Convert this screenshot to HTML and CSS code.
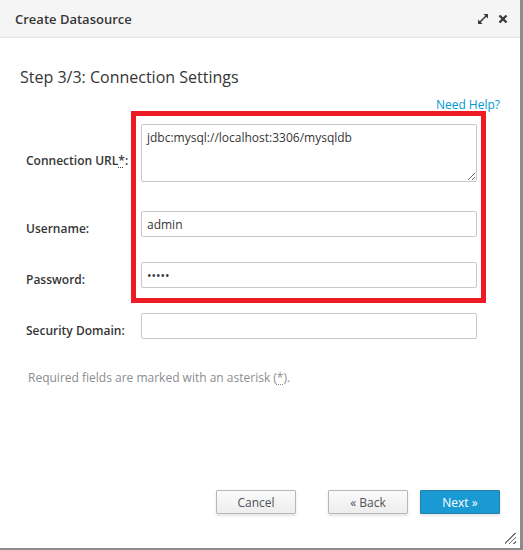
FILE: index.html
```html
<!DOCTYPE html>
<html>
<head>
<meta charset="utf-8">
<link rel="stylesheet" href="styles.css">
</head>
<body>
<div class="dialog">
  <div class="header">
    <span class="title">Create Datasource</span>
    <div class="tools">
      <svg class="ico" width="12" height="12" viewBox="0 0 12 12"><path d="M2 10 L10 2" stroke="#3a3a3a" stroke-width="1.6"/><path d="M1 11 L1 6.5 L5.5 11 Z" fill="#3a3a3a"/><path d="M11 1 L11 5.5 L6.5 1 Z" fill="#3a3a3a"/></svg>
      <svg class="ico" width="10" height="10" viewBox="0 0 10 10"><path d="M1.5 1.5 L8.5 8.5 M8.5 1.5 L1.5 8.5" stroke="#3a3a3a" stroke-width="2.4"/></svg>
    </div>
  </div>
  <div class="body">
    <h2 class="step">Step 3/3: Connection Settings</h2>
    <div class="help"><a href="#">Need Help?</a></div>
    <div class="form">
      <label class="lbl lbl-url">Connection URL<abbr title="required">*</abbr>:</label>
      <textarea class="ctl area">jdbc:mysql://localhost:3306/mysqldb</textarea>
      <label class="lbl">Username:</label>
      <input class="ctl" type="text" value="admin">
      <label class="lbl">Password:</label>
      <input class="ctl" type="password" value="admin">
      <label class="lbl">Security Domain:</label>
      <input class="ctl" type="text" value="">
      <div class="highlight"></div>
    </div>
    <p class="note">Required fields are marked with an asterisk (<abbr title="required">*</abbr>).</p>
  </div>
  <div class="footer">
    <button class="btn">Cancel</button>
    <button class="btn back">&laquo; Back</button>
    <button class="btn primary">Next &raquo;</button>
  </div>
  <div class="grip"></div>
</div>
</body>
</html>
```
FILE: styles.css
```css
html, body {
  margin: 0;
  padding: 0;
}
body {
  width: 523px;
  height: 550px;
  background: #8c8c8c;
  font-family: "Open Sans", "Liberation Sans", sans-serif;
  color: #363636;
  overflow: hidden;
}
.dialog {
  position: relative;
  width: 520px;
  height: 548px;
  background: #fff;
  display: flex;
  flex-direction: column;
}
.header {
  height: 38px;
  box-sizing: border-box;
  background: #f5f5f5;
  border-bottom: 1px solid #e4e4e4;
  display: flex;
  align-items: center;
  justify-content: space-between;
  padding: 0 12px 0 15px;
}
.title {
  font-size: 13px;
  font-weight: 600;
  color: #363636;
}
.tools {
  display: flex;
  align-items: center;
  gap: 9px;
}
.ico { display: block; }
.body {
  position: relative;
  flex: 1;
  padding: 0 20px 0 20px;
}
.step {
  margin: 28px 0 0 0;
  font-size: 16px;
  font-weight: 400;
  line-height: 22px;
  color: #363636;
}
.help {
  text-align: right;
  font-size: 12px;
  line-height: 16px;
  margin-top: 9px;
}
.help a {
  color: #0099d3;
  text-decoration: none;
}
.form {
  position: relative;
  display: grid;
  grid-template-columns: 115px 336px;
  align-items: center;
  row-gap: 25px;
  padding-left: 6px;
  margin-top: 11px;
}
.lbl {
  font-size: 12px;
  font-weight: 600;
  color: #363636;
  white-space: nowrap;
  padding-top: 8px;
}
.lbl-url { padding-top: 10px; }
abbr {
  text-decoration: underline dotted;
  text-underline-offset: 2px;
}
.ctl {
  box-sizing: border-box;
  width: 336px;
  height: 26px;
  margin: 0;
  border: 1px solid #c8c8c8;
  border-radius: 2px;
  padding: 2px 5px;
  font-family: "Open Sans", "Liberation Sans", sans-serif;
  font-size: 12px;
  color: #363636;
  background: #fff;
}
.area {
  height: 58px;
  padding: 4px 5px;
  resize: both;
  margin-bottom: 4px;
}
.highlight {
  position: absolute;
  left: 111px;
  top: -13px;
  width: 345px;
  height: 182px;
  border: 5px solid #ed1c24;
  pointer-events: none;
}
.note {
  margin: 30px 0 0 8px;
  font-size: 12px;
  color: #8b8d8f;
}
.footer {
  height: 58px;
  display: flex;
  align-items: flex-start;
  justify-content: flex-end;
  gap: 32px;
  padding: 0 20px 0 0;
}
.footer .primary { margin-left: -20px; }
.btn {
  width: 80px;
  height: 24px;
  box-sizing: border-box;
  border: 1px solid #b7b7b7;
  border-radius: 1px;
  background: linear-gradient(#fafafa, #ededed);
  box-shadow: 0 2px 3px rgba(0,0,0,0.1);
  font-family: "Open Sans", "Liberation Sans", sans-serif;
  font-size: 12px;
  color: #4d5258;
  padding: 0;
}
.btn.primary {
  background: #1a9ad2;
  border-color: #267da9;
  color: #fff;
}
.grip {
  position: absolute;
  right: 4px;
  bottom: 4px;
  width: 11px;
  height: 11px;
  background: linear-gradient(135deg, transparent 0 45%, #777 45% 52%, transparent 52% 65%, #777 65% 72%, transparent 72% 85%, #777 85% 92%, transparent 92%);
}
```
